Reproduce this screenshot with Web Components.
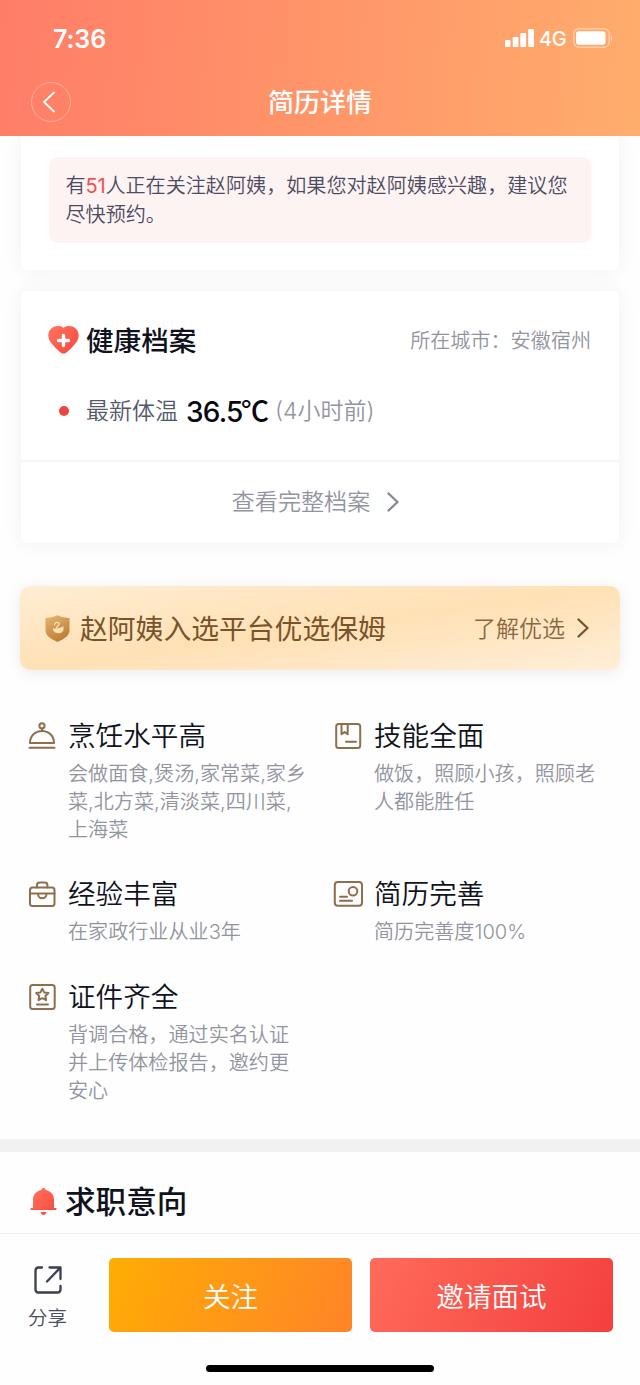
<!DOCTYPE html>
<html lang="zh-CN">
<head>
<meta charset="utf-8">
<title>简历详情</title>
<style>
html,body{margin:0;padding:0}
body{width:640px;height:1385px;overflow:hidden;background:#fefefe;font-family:Inter,"Noto Sans CJK SC",sans-serif;color:#10121c}
</style>
</head>
<body>
<resume-page></resume-page>
<script>
const define = (name, html) => {
  const tpl = document.createElement('template');
  tpl.innerHTML = html;
  customElements.define(name, class extends HTMLElement {
    constructor() {
      super();
      this.attachShadow({ mode: 'open' }).append(tpl.content.cloneNode(true));
    }
  });
};

/* Line icons used by the feature list, drawn in a 28x28 box */
const ICONS = {
  dish: '<circle cx="14" cy="3.8" r="2.6"/><path d="M14 6.4V9M2 21c0-7.200 5.300-12 12-12s12 4.800 12 12ZM1.500 25.800h25"/>',
  book: '<rect x="2.200" y="2" width="24" height="24" rx="2.500"/><path d="M7.500 2v10.300l3.100-2.200 3.100 2.200V2M12 19.800h10"/>',
  bag: '<rect x="2" y="7.500" width="24.500" height="18.500" rx="2.500"/><path d="M9 7.500V5.200Q9 2.500 11.700 2.500h5Q19.400 2.500 19.400 5.200v2.300M2 13.600h24.500M10 13.800c0 6 8.500 6 8.500 0"/>',
  card: '<rect x=".8" y="2" width="27.200" height="23.800" rx="3"/><circle cx="19" cy="11.300" r="4.300"/><path d="M6 16.800h7M6 20.800h12"/>',
  cert: '<rect x="2.200" y="2" width="24.500" height="24" rx="2.500"/><path d="m14.300 5.700 1.900 3.700 4.200.6-3 3 .7 4.100-3.800-1.900-3.800 1.900.7-4.100-3-3 4.200-.6ZM9 21.400h11"/>'
};
customElements.define('line-icon', class extends HTMLElement {
  constructor() { super(); this.attachShadow({ mode: 'open' }); }
  connectedCallback() {
    this.shadowRoot.innerHTML = `<style>:host{display:block;width:28px;height:28px}svg{display:block;overflow:visible}</style>
    <svg width="28" height="28" viewBox="0 0 28 28" fill="none" stroke="#8d6e4d" stroke-width="2" stroke-linecap="round" stroke-linejoin="round">${ICONS[this.getAttribute('name')]}</svg>`;
  }
});

define('chevron-icon', `<style>:host{display:block;width:12px;height:20px}svg{display:block}</style>
<svg width="12" height="20" viewBox="0 0 12 20" fill="none" stroke="currentColor" stroke-width="2.300" stroke-linecap="round" stroke-linejoin="round"><path d="m1.500 1.500 9 8.500-9 8.500"/></svg>`);

define('status-bar', `<style>
:host{display:flex;height:76px;align-items:center;justify-content:space-between;box-sizing:border-box;padding:0 26px 0 53px;color:#fff}
time{font-size:25px;line-height:30px;font-weight:600;letter-spacing:-.1px;padding-top:2px}
div{display:flex;align-items:center}
span{font-size:20px;line-height:24px;font-weight:500;margin:1px 7px 0 5px;width:27px;letter-spacing:-.5px}
svg{display:block}
</style>
<time>7:36</time>
<div>
<svg width="29" height="18" fill="#fff"><rect y="11" width="5.500" height="7" rx="1.300"/><rect x="7.700" y="8" width="5.800" height="10" rx="1.300"/><rect x="15.300" y="4" width="5.800" height="14" rx="1.300"/><rect x="23.200" width="5.800" height="18" rx="1.300"/></svg>
<span>4G</span>
<svg width="41" height="20"><rect x=".8" y=".8" width="35.500" height="18.400" rx="5" fill="none" stroke="#fff" stroke-opacity=".42" stroke-width="1.500"/><rect x="3" y="3.200" width="29.500" height="13.600" rx="2.800" fill="#fff"/><path d="M38 7v6.500q2.600-3.200 0-6.500" fill="#fff" opacity=".5"/></svg>
</div>`);

define('app-header', `<style>
:host{display:block;height:136px;background:linear-gradient(95deg,#ff7d68 0%,#ff9569 50%,#ffad6d 100%);position:relative;z-index:1;color:#fff}
nav{display:grid;grid-template-columns:40px 1fr 40px;padding:0 31px;height:52px;align-items:center}
i{box-sizing:border-box;width:40px;height:40px;border:1px solid rgba(255,255,255,.34);border-radius:50%;display:grid;place-items:center}
i svg{margin-right:5px}
h1{margin:2px 0 0;text-align:center;font-size:26px;line-height:40px;font-weight:500}
</style>
<status-bar></status-bar>
<nav><i><svg width="14" height="22" viewBox="0 0 14 22" fill="none" stroke="#fff" stroke-width="1.800" stroke-linecap="round" stroke-linejoin="round"><path d="M12 1.500 2 11l10 9.500"/></svg></i><h1>简历详情</h1></nav>`);

define('notice-card', `<style>
:host{display:block;height:134px;box-sizing:border-box;margin:0 21px;padding:21px 28px 0;background:#fff;border-radius:0 0 6px 6px;box-shadow:0 0 22px rgba(30,25,40,.055)}
p{margin:0;box-sizing:border-box;height:86px;padding:15px 17px 0 16.500px;border-radius:8px;background:#fef3f3;font-size:20.100px;line-height:29px;font-weight:350;color:#4b4c61;white-space:nowrap}
b{font-weight:400;color:#f4504d;letter-spacing:-.3px}
</style><p>有<b>51</b>人正在关注赵阿姨，如果您对赵阿姨感兴趣，建议您<br>尽快预约。</p>`);

define('health-card', `<style>
:host{display:block;height:252px;box-sizing:border-box;margin:21px 21px 0;background:#fff;border-radius:6px;box-shadow:0 0 22px rgba(30,25,40,.055)}
header{display:flex;align-items:center;padding:30px 28px 0 27px;height:40px}
header svg{margin-right:7px;margin-top:-3px}
h2{margin:0;font-size:27.600px;line-height:40px;font-weight:500;flex:1}
small{font-size:20.100px;line-height:40px;font-weight:350;color:#92949f}
.temp{display:flex;align-items:center;height:40px;padding:30px 0 0 38px;font-size:23px;line-height:40px;white-space:nowrap;color:#55576b;font-weight:350}
.temp i{width:10px;height:10px;border-radius:50%;background:#ef4444;margin-right:17px}
.temp b{font-size:28px;font-weight:500;color:#08090f;margin:0 8px 0 8px;width:81px;letter-spacing:-.8px}
.temp b span{font-family:"Noto Sans CJK SC",sans-serif;letter-spacing:0;margin-left:-1.500px}
.temp em{font-style:normal;color:#92949f}
footer{display:flex;align-items:center;justify-content:center;height:83px;margin-top:29px;border-top:2px solid #f5f5f6;font-size:23.100px;line-height:40px;color:#92949f;font-weight:350;gap:17px;padding:0 9px 2px 0;box-sizing:border-box}
footer chevron-icon{color:#858691}
</style>
<header><svg width="31" height="28" viewBox="0 0 31 28"><defs><linearGradient id="g" x2="1" y2="1"><stop stop-color="#ff765f"/><stop offset="1" stop-color="#f9443d"/></linearGradient></defs><path d="M15.500 1.700C12.500-.6 6.500-.6 3.300 2.600-.8 6.700-.3 12.300 2.700 16.300c2.700 3.800 6.500 7.400 9.800 10.100q3 2.400 6 0c3.300-2.700 7.100-6.300 9.800-10.100 3-4 3.500-9.600-.6-13.700-3.200-3.200-9.200-3.200-12.200-.9Z" fill="url(#g)"/><path d="M15.500 9.500v10M10.500 14.500h10" stroke="#fff" stroke-width="3.400" stroke-linecap="round"/></svg><h2>健康档案</h2><small>所在城市：安徽宿州</small></header>
<div class="temp"><i></i>最新体温<b>36.5<span>℃</span></b><em>(4小时前)</em></div>
<footer>查看完整档案<chevron-icon></chevron-icon></footer>`);

define('select-banner', `<style>
:host{display:flex;align-items:center;box-sizing:border-box;height:84px;margin:43px 20px 0;padding:0 31px 0 25px;border-radius:10px;background:linear-gradient(to bottom right,#ffedd3,#ffe1b5 50%,#ffeed8);box-shadow:0 3px 16px rgba(40,30,30,.08);color:#79532a}
strong{font-size:27.800px;line-height:40px;font-weight:400;margin-left:10px;flex:1;white-space:nowrap;padding-top:1px}
span{font-size:23px;line-height:40px;font-weight:350;color:#8a683f;margin-right:12px;padding-top:1px}
</style>
<svg width="25" height="27" viewBox="0 0 25 27"><defs><linearGradient id="s" x2=".5" y2="1"><stop stop-color="#e6b575"/><stop offset="1" stop-color="#bd7f36"/></linearGradient></defs><path d="M12.500.3Q18 3.200 24.500 3V15c0 5-3.500 8-12 12C4 23 .5 20 .5 15V3Q7 3.200 12.500.3Z" fill="url(#s)"/><path d="M8 13c2 1.300 4 0 6.500-.3 1.900-.2 2.700-.9 4-1.500.6 4-.8 7-4.700 7-3.900 0-6.200-2-5.800-5.200Z" fill="#fbe0b4"/><path d="M9.500 10c.3-3.200 4.800-3.500 4.700-1 0 1.500-2.500 2.200-2.700 4" fill="none" stroke="#fbe0b4" stroke-width="1.300" stroke-linecap="round"/></svg>
<strong>赵阿姨入选平台优选保姆</strong><span>了解优选</span><chevron-icon></chevron-icon>`);

define('feature-item', `<style>
:host{display:grid;grid-template-columns:28px 1fr;column-gap:12px;align-content:start}
.icon{display:block;padding-top:6px}
h3{margin:0;font-size:27.600px;line-height:40px;font-weight:350;white-space:nowrap}
p{grid-column:2;margin:4px 0 0;font-size:20.100px;line-height:28px;font-weight:350;color:#92949f;white-space:nowrap}
</style><slot class="icon" name="icon"></slot><h3><slot name="title"></slot></h3><p><slot></slot></p>`);

define('feature-list', `<style>
:host{display:grid;grid-template-columns:306px 278px;row-gap:30px;margin:46px 0 0 28px;height:423px;align-content:start}
.last{margin-top:1px}
</style>
<feature-item><line-icon slot="icon" name="dish"></line-icon><span slot="title">烹饪水平高</span>会做面食,煲汤,家常菜,家乡<br>菜,北方菜,清淡菜,四川菜,<br>上海菜</feature-item>
<feature-item><line-icon slot="icon" name="book"></line-icon><span slot="title">技能全面</span>做饭，照顾小孩，照顾老<br>人都能胜任</feature-item>
<feature-item><line-icon slot="icon" name="bag"></line-icon><span slot="title">经验丰富</span>在家政行业从业3年</feature-item>
<feature-item><line-icon slot="icon" name="card"></line-icon><span slot="title">简历完善</span>简历完善度100%</feature-item>
<feature-item class="last"><line-icon slot="icon" name="cert"></line-icon><span slot="title">证件齐全</span>背调合格，通过实名认证<br>并上传体检报告，邀约更<br>安心</feature-item>`);

define('job-section', `<style>
:host{display:flex;align-items:center;box-sizing:border-box;height:94px;border-top:13px solid #f1f1f1;padding:18px 0 0 30px}
h2{margin:0 0 0 8px;font-size:30.600px;line-height:40px;font-weight:500}
</style>
<svg width="27" height="28" viewBox="0 0 27 28"><defs><linearGradient id="b" x2="1" y2="1"><stop stop-color="#ff755d"/><stop offset="1" stop-color="#fb463e"/></linearGradient></defs><path d="M13.500 0q2 0 2.300 2C20.500 3 24 6.500 24 11.500V20h1.700a1 1 0 0 1 0 2H1.300a1 1 0 0 1 0-2H3v-8.500C3 6.500 6.500 3 11.200 2q.3-2 2.300-2ZM10.500 24h6q-.7 3-3 3t-3-3Z" fill="url(#b)"/></svg>
<h2>求职意向</h2>`);

define('action-button', `<style>
:host{display:grid;place-items:center;height:74px;border-radius:5px;color:#fff;font-size:27.600px;line-height:40px;font-weight:350;padding-top:3px;box-sizing:border-box;background:linear-gradient(115deg,#ffad04,#ff8428)}
:host([primary]){background:linear-gradient(115deg,#ff6b5a,#f43f3e)}
</style><slot></slot>`);

define('action-bar', `<style>
:host{display:block;box-sizing:border-box;height:152px;border-top:1px solid #f1f1f2;background:#fefefe}
.row{display:grid;grid-template-columns:63px 243px 243px;column-gap:18px;padding:24px 27px 0 28px;height:74px}
.share{width:39px;display:flex;flex-direction:column;align-items:center;padding-top:8px;font-size:19.500px;line-height:28px;font-weight:350;color:#4b4d61;white-space:nowrap}
.share svg{display:block;margin-bottom:10px}
.bar{width:228px;height:7px;border-radius:4px;background:#000;margin:33px auto 0}
</style>
<div class="row"><div class="share"><svg width="28" height="28" viewBox="0 0 28 28" fill="none" stroke="#3b3d53" stroke-width="2.300" stroke-linecap="round" stroke-linejoin="round"><path d="M8 1.500H4.500q-3 0-3 3v19q0 3 3 3h19q3 0 3-3v-3.500M15.500 1.500h11v11.500M26 2 13 15.500"/></svg>分享</div><action-button>关注</action-button><action-button primary>邀请面试</action-button></div>
<div class="bar"></div>`);

define('resume-page', `<style>:host{display:flex;flex-direction:column;width:640px;height:1385px;overflow:hidden}:host>*{flex:none}</style>
<app-header></app-header><notice-card></notice-card><health-card></health-card><select-banner></select-banner><feature-list></feature-list><job-section></job-section><action-bar></action-bar>`);
</script>
</body>
</html>
